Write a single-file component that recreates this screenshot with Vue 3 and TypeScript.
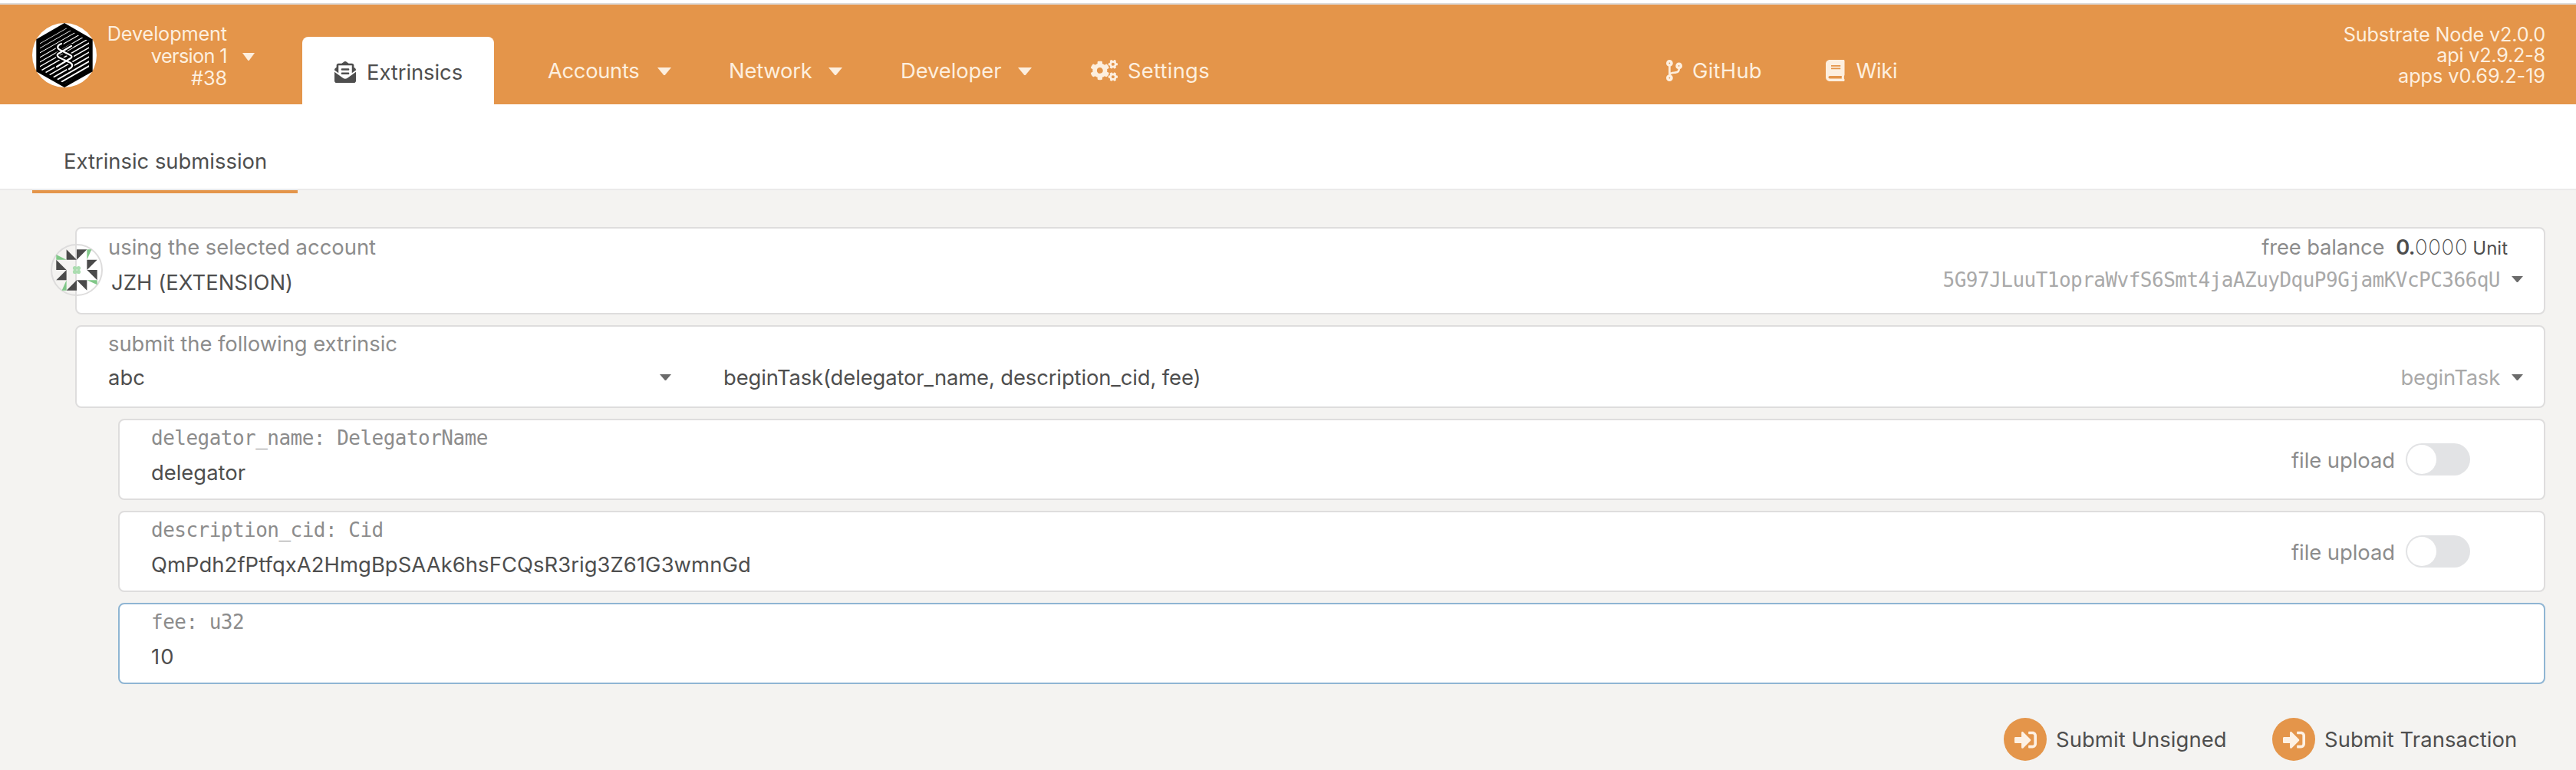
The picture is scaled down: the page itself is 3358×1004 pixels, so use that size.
<script setup lang="ts">
interface NavItem { label: string; cls: string; icon?: string; box?: string; caret?: boolean }

const icons: Record<string, string> = {
  branch: 'M384 144c0-44.2-35.8-80-80-80s-80 35.8-80 80c0 36.4 24.3 67.1 57.5 76.8-.6 16.1-4.2 28.5-11 36.9-15.4 19.2-49.3 22.4-85.2 25.7-28.2 2.6-57.4 5.4-81.3 16.9v-144c32.5-10.2 56-40.5 56-76.3 0-44.2-35.8-80-80-80S0 35.8 0 80c0 35.8 23.5 66.1 56 76.3v199.3C23.5 365.9 0 396.2 0 432c0 44.2 35.8 80 80 80s80-35.8 80-80c0-34-21.2-63.1-51.2-74.6 3.1-5.2 7.8-9.8 14.9-13.4 16.2-8.2 40.4-10.4 66.1-12.8 42.2-3.9 90-8.4 118.2-43.4 14-17.4 21.1-39.8 21.6-67.9 31.6-10.8 54.4-40.7 54.4-75.9zM80 64c8.8 0 16 7.2 16 16s-7.2 16-16 16-16-7.2-16-16 7.2-16 16-16zm0 384c-8.8 0-16-7.2-16-16s7.2-16 16-16 16 7.2 16 16-7.2 16-16 16zm224-320c8.8 0 16 7.2 16 16s-7.2 16-16 16-16-7.2-16-16 7.2-16 16-16z',
  book: 'M448 360V24c0-13.3-10.7-24-24-24H96C43 0 0 43 0 96v320c0 53 43 96 96 96h328c13.3 0 24-10.7 24-24v-16c0-7.5-3.5-14.3-8.9-18.7-4.2-15.4-4.2-59.3 0-74.7 5.4-4.3 8.9-11.1 8.9-18.6zM128 134c0-3.3 2.7-6 6-6h212c3.3 0 6 2.7 6 6v20c0 3.3-2.7 6-6 6H134c-3.3 0-6-2.7-6-6v-20zm0 64c0-3.3 2.7-6 6-6h212c3.3 0 6 2.7 6 6v20c0 3.3-2.7 6-6 6H134c-3.3 0-6-2.7-6-6v-20zm253.4 250H96c-17.7 0-32-14.3-32-32 0-17.6 14.4-32 32-32h285.4c-1.9 17.1-1.9 46.9 0 64z',
  signIn: 'M416 448h-84c-6.6 0-12-5.4-12-12v-40c0-6.6 5.4-12 12-12h84c17.7 0 32-14.3 32-32V160c0-17.7-14.3-32-32-32h-84c-6.6 0-12-5.4-12-12V76c0-6.6 5.4-12 12-12h84c53 0 96 43 96 96v192c0 53-43 96-96 96zm-47-201L201 79c-15-15-41-4.5-41 17v96H24c-13.3 0-24 10.7-24 24v96c0 13.3 10.7 24 24 24h136v96c0 21.5 26 32 41 17l168-168c9.3-9.4 9.3-24.6 0-34z',
  envelope: 'M176 216h160c8.84 0 16-7.16 16-16v-16c0-8.84-7.16-16-16-16H176c-8.84 0-16 7.16-16 16v16c0 8.84 7.16 16 16 16zm-16 80c0 8.84 7.16 16 16 16h160c8.84 0 16-7.16 16-16v-16c0-8.84-7.16-16-16-16H176c-8.84 0-16 7.16-16 16v16zm96 121.13c-16.42 0-32.84-5.06-46.86-15.19L0 250.86V464c0 26.51 21.49 48 48 48h416c26.51 0 48-21.49 48-48V250.86L302.86 401.94c-14.02 10.12-30.44 15.19-46.86 15.19zm237.61-254.18c-8.85-6.94-17.24-13.47-29.61-22.81V96c0-26.51-21.49-48-48-48h-77.55c-3.04-2.2-5.87-4.26-9.04-6.56C312.6 29.17 279.2-.35 256 0c-23.2-.35-56.59 29.17-73.41 41.44-3.17 2.3-6 4.36-9.04 6.56H96c-26.51 0-48 21.49-48 48v44.14c-12.37 9.33-20.76 15.87-29.61 22.81A47.995 47.995 0 0 0 0 200.72v10.65l96 69.35V96h320v184.72l96-69.35v-10.65c0-14.74-6.78-28.67-18.39-37.77z',
  bigGear: 'M386.3 286.1l33.7 16.8c10.1 5.8 14.5 18.1 10.5 29.1-8.9 24.2-26.4 46.4-42.6 65.8-7.4 8.9-20.2 11.1-30.3 5.3l-29.1-16.8c-16 13.7-34.6 24.6-54.9 31.7v33.6c0 11.6-8.3 21.6-19.7 23.6-24.6 4.2-50.4 4.4-75.9 0-11.5-2-20-11.9-20-23.6V418c-20.3-7.2-38.9-18-54.9-31.7L74 403c-10 5.8-22.9 3.6-30.3-5.3-16.2-19.4-33.3-41.6-42.2-65.7-4-10.9.4-23.2 10.5-29.1l33.3-16.8c-3.9-20.9-3.9-42.4 0-63.4L12 205.8c-10.1-5.8-14.6-18.1-10.5-29 8.9-24.2 26-46.4 42.2-65.8 7.4-8.9 20.2-11.1 30.3-5.3l29.1 16.8c16-13.7 34.6-24.6 54.9-31.7V57.1c0-11.5 8.2-21.5 19.6-23.5 24.6-4.2 50.5-4.4 76-.1 11.5 2 20 11.9 20 23.6v33.6c20.3 7.2 38.9 18 54.9 31.7l29.1-16.8c10-5.8 22.9-3.6 30.3 5.3 16.2 19.4 33.2 41.6 42.1 65.8 4 10.9.1 23.2-10 29.1l-33.7 16.8c3.9 21 3.9 42.5 0 63.5zm-117.6 21.1c59.2-77-28.7-164.9-105.7-105.7-59.2 77 28.7 164.9 105.7 105.7z',
  smallGear: 'M512.1 191l-8.2 14.3c-3 5.3-9.4 7.5-15.1 5.4-11.8-4.4-22.6-10.7-32.1-18.6-4.6-3.8-5.8-10.5-2.8-15.7l8.2-14.3c-6.9-8-12.3-17.3-15.9-27.4h-16.5c-6 0-11.2-4.3-12.2-10.3-2-12-2.1-24.6 0-37.1 1-6 6.2-10.4 12.2-10.4h16.5c3.6-10.1 9-19.4 15.9-27.4l-8.2-14.3c-3-5.2-1.9-11.9 2.8-15.7 9.5-7.9 20.4-14.2 32.1-18.6 5.7-2.1 12.1.1 15.1 5.4l8.2 14.3c10.5-1.9 21.2-1.9 31.7 0L552 6.3c3-5.3 9.4-7.5 15.1-5.4 11.8 4.4 22.6 10.7 32.1 18.6 4.6 3.8 5.8 10.5 2.8 15.7l-8.2 14.3c6.9 8 12.3 17.3 15.9 27.4h16.5c6 0 11.2 4.3 12.2 10.3 2 12 2.1 24.6 0 37.1-1 6-6.2 10.4-12.2 10.4h-16.5c-3.6 10.1-9 19.4-15.9 27.4l8.2 14.3c3 5.2 1.9 11.9-2.8 15.7-9.5 7.9-20.4 14.2-32.1 18.6-5.7 2.1-12.1-.1-15.1-5.4l-8.2-14.3c-10.4 1.9-21.2 1.9-31.7 0zm-10.5-58.8c38.5 29.6 82.4-14.3 52.8-52.8-38.5-29.7-82.4 14.3-52.8 52.8z',
}

const nav: NavItem[] = [
  { label: 'Accounts', cls: 'n-accounts', caret: true },
  { label: 'Network', cls: 'n-network', caret: true },
  { label: 'Developer', cls: 'n-developer', caret: true },
  { label: 'Settings', cls: 'n-settings', icon: 'gears' },
  { label: 'GitHub', cls: 'n-github', icon: 'branch', box: '0 0 384 512' },
  { label: 'Wiki', cls: 'n-wiki', icon: 'book', box: '0 0 448 512' },
]

const params = [
  { type: 'delegator_name: DelegatorName', value: 'delegator', upload: true, cls: 'v-name' },
  { type: 'description_cid: Cid', value: 'QmPdh2fPtfqxA2HmgBpSAAk6hsFCQsR3rig3Z61G3wmnGd', upload: true, cls: 'v-cid' },
  { type: 'fee: u32', value: '10', upload: false, cls: 'v-fee' },
]

const actions = ['Submit Unsigned', 'Submit Transaction']

// Diagonal hatching of the logo, getting heavier towards the bottom
const stripes = Array.from({ length: 15 }, (_, i) => ({ y: 2 + i * 6, w: 0.7 + i * 0.1 }))
</script>

<template>
  <div class="page">
    <header class="topbar">
      <div class="chain">
        <svg class="logo" viewBox="0 0 84 84">
          <defs>
            <clipPath id="hexInner"><path d="M42 5L74 24V60L42 79L10 60V24Z" /></clipPath>
          </defs>
          <circle cx="42" cy="42" r="42" fill="#fff" />
          <path d="M42 0L78.7 21.3V63.3L42 84L5.3 63.3V21.3Z" fill="#000" />
          <g clip-path="url(#hexInner)" stroke="#fff">
            <line v-for="s in stripes" :key="s.y" x1="8" :y1="s.y + 20" x2="76" :y2="s.y - 19" :stroke-width="s.w" />
          </g>
          <g fill="none" stroke-linecap="round" stroke-linejoin="round">
            <g stroke="#000" stroke-width="5.5">
              <path d="M38 27C32 29 32 33 36 35L50 42Q53 44 50 46L32 57" />
              <path d="M51 30L34 40Q31 42 35 45L50 52C54 55 52 58 48 60" />
            </g>
            <g stroke="#fff" stroke-width="2.2">
              <path d="M38 27C32 29 32 33 36 35L50 42Q53 44 50 46L32 57" />
              <path d="M51 30L34 40Q31 42 35 45L50 52C54 55 52 58 48 60" />
            </g>
          </g>
        </svg>
        <div class="chain-info">
          <div class="s-dev">Development</div>
          <div class="s-ver">version 1</div>
          <div class="s-num">#38</div>
        </div>
        <i class="caret caret-chain"></i>
      </div>
      <div class="tab">
        <svg viewBox="0 0 512 512" width="28" height="28"><path :d="icons.envelope" fill="currentColor" /></svg>
        <span>Extrinsics</span>
      </div>
      <nav class="nav">
        <div v-for="n in nav" :key="n.label" class="nav-item" :class="n.cls">
          <svg v-if="n.icon === 'gears'" viewBox="0 0 640 512" width="35" height="28">
            <path :d="icons.bigGear" fill="currentColor" />
            <path :d="icons.smallGear" fill="currentColor" />
            <path :d="icons.smallGear" fill="currentColor" transform="translate(0 298.9)" />
          </svg>
          <svg v-else-if="n.icon" :viewBox="n.box" height="28"><path :d="icons[n.icon]" fill="currentColor" /></svg>
          <span class="nav-label">{{ n.label }}</span>
          <i v-if="n.caret" class="caret caret-nav"></i>
        </div>
      </nav>
      <div class="versions">
        <div class="s-node">Substrate Node v2.0.0</div>
        <div class="s-api">api v2.9.2-8</div>
        <div class="s-apps">apps v0.69.2-19</div>
      </div>
    </header>

    <div class="subbar"><div class="subtab">Extrinsic submission</div></div>

    <main class="content">
      <section class="card account">
        <svg class="identicon" viewBox="0 0 68 68">
          <circle cx="34" cy="34" r="33" fill="none" stroke="#dddcdc" stroke-width="2" />
          <g transform="translate(7.3 7.3) scale(13.35)">
            <path fill="#4a4a4a" d="M1 0L2 1H1ZM2 0H3L2 1ZM0 1L1 2H0ZM3 1H4L3 2ZM1 2V3H0ZM3 2H4V3ZM2 3V4H1ZM2 3H3V4Z" />
            <path fill="#80c788" d="M0 .5L1 1H0ZM3 0H3.45L3 1ZM1 3V4H.55ZM3 3H4V3.45Z" />
            <g fill="#abddb0">
              <circle cx="1.82" cy="1.82" r=".2" /><circle cx="2.18" cy="1.82" r=".2" />
              <circle cx="1.82" cy="2.18" r=".2" /><circle cx="2.18" cy="2.18" r=".2" />
            </g>
          </g>
        </svg>
        <div class="row">
          <span class="label">using the selected account</span>
          <span class="balance">
            <span class="label free">free balance</span><b>0.</b><span class="decimals">0000</span><span class="unit">Unit</span>
          </span>
        </div>
        <div class="row">
          <span class="account-name">JZH (EXTENSION)</span>
          <span class="picker"><span class="mono address">5G97JLuuT1opraWvfS6Smt4jaAZuyDquP9GjamKVcPC366qU</span><i class="caret caret-small"></i></span>
        </div>
      </section>

      <section class="card extrinsic">
        <div class="row"><span class="label following">submit the following extrinsic</span></div>
        <div class="row">
          <span class="module"><span>abc</span><i class="caret caret-small"></i></span>
          <span class="call">beginTask(delegator_name, description_cid, fee)</span>
          <span class="picker"><span class="method">beginTask</span><i class="caret caret-small"></i></span>
        </div>
      </section>

      <section v-for="p in params" :key="p.type" class="card param" :class="{ focused: !p.upload }">
        <div>
          <div class="mono type">{{ p.type }}</div>
          <div :class="p.cls">{{ p.value }}</div>
        </div>
        <div v-if="p.upload" class="upload">
          <span class="label file">file upload</span>
          <span class="toggle"><i></i></span>
        </div>
      </section>

      <div class="actions">
        <div v-for="a in actions" :key="a" class="action">
          <span class="action-icon"><svg viewBox="0 0 512 512" width="29" height="29"><path :d="icons.signIn" fill="#fdf1e4" /></svg></span>
          <span class="action-label">{{ a }}</span>
        </div>
      </div>
    </main>
  </div>
</template>

<style>
body { margin: 0; background: #f4f3f1; }
</style>

<style scoped>
.page { box-sizing: border-box; width: 3358px; height: 1004px; padding-top: 4px; overflow: hidden; background: linear-gradient(#fff 4px, #f4f3f1 4px); font: 400 27.4px/40px Inter, "Liberation Sans", sans-serif; color: #4e4e4e; white-space: nowrap; }
.page * { box-sizing: border-box; }
.topbar { display: flex; height: 132px; border-top: 2px solid #dcdcdc; background: #e4954a; color: #fdefdf; }
.chain { display: flex; width: 394px; padding: 24px 0 0 42px; align-items: flex-start; }
.logo { width: 84px; height: 84px; display: block; }
.chain-info { width: 170px; text-align: right; font-size: 25.3px; line-height: 29px; margin-top: -1px; }
.s-dev { letter-spacing: -.15px; }
.s-ver { letter-spacing: -.65px; }
.s-num { letter-spacing: -.1px; }
.caret { display: block; flex: none; width: 18px; height: 10px; background: currentColor; clip-path: polygon(0 0, 100% 0, 54% 100%, 46% 100%); }
.caret-chain { margin: 39px 0 0 20px; width: 16px; }
.tab { display: flex; align-items: center; width: 250px; height: 88px; margin-top: 42px; padding: 4px 0 0 42px; gap: 14px; border-radius: 8px 8px 0 0; background: #fff; color: #4e4e4e; letter-spacing: -.06px; }
.nav { display: flex; align-items: flex-start; width: 2270px; padding: 66px 0 0 70px; }
.nav-item { display: flex; align-items: center; height: 40px; }
.nav-item svg { flex: none; }
.n-accounts { width: 236px; letter-spacing: -.34px; }
.n-accounts .nav-label { width: 143px; }
.n-network { width: 224px; letter-spacing: -.22px; }
.n-network .nav-label { width: 130px; }
.n-developer { width: 248px; letter-spacing: -.08px; }
.n-developer .nav-label { width: 153px; }
.n-settings { width: 750px; letter-spacing: .25px; }
.n-github { width: 208px; letter-spacing: .25px; }
.n-wiki { letter-spacing: -.4px; }
.caret-nav { margin-top: 2px; }
.n-settings .nav-label, .n-github .nav-label { margin-left: 13px; }
.n-wiki .nav-label { margin-left: 15px; }
.versions { width: 404px; padding-top: 25px; text-align: right; font-size: 25.3px; line-height: 27px; }
.s-node { letter-spacing: -.21px; }
.s-api { letter-spacing: -.25px; }
.s-apps { letter-spacing: -.06px; }
.subbar { height: 112px; border-bottom: 2px solid #ebeaea; background: #fff; padding-left: 42px; }
.subtab { width: 346px; height: 116px; border-bottom: 4px solid #e4954a; padding: 54px 0 0 41px; }
.content { padding: 48px 40px 0 98px; }
.card { position: relative; border: 2px solid #dedddd; border-radius: 8px; background: #fff; margin-bottom: 14px; padding-left: 41px; }
.account { height: 114px; padding-top: 4px; }
.account .row + .row { margin-top: 6px; }
.account-name { margin-left: 4px; letter-spacing: .06px; }
.extrinsic { height: 108px; padding-top: 2px; }
.extrinsic .row + .row { margin-top: 4px; }
.row { display: flex; justify-content: space-between; height: 40px; }
.label { color: #8c8c8c; }
.following { letter-spacing: -.05px; }
.balance { padding-right: 47px; display: flex; align-items: baseline; }
.free { letter-spacing: -.16px; }
.balance b { font-weight: 600; margin-left: 15px; letter-spacing: -.7px; }
.decimals { font-weight: 200; letter-spacing: .8px; }
.unit { font-size: 24px; margin-left: 6px; }
.picker { display: flex; align-items: flex-start; padding-right: 27px; }
.mono { font-family: "DejaVu Sans Mono", "Liberation Mono", monospace; font-size: 26px; letter-spacing: -.52px; }
.address { color: #a9a9a9; margin-top: -3px; }
.caret-small { width: 15px; height: 8px; margin: 16px 0 0 15px; color: #6b6b6b; }
.account .caret-small { margin-top: 12px; }
.method { color: #a9a9a9; letter-spacing: -.17px; }
.module { display: flex; width: 802px; justify-content: space-between; padding-right: 68px; }
.call { flex: 1; letter-spacing: -.11px; }
.identicon { position: absolute; left: -34px; top: 20px; width: 68px; height: 68px; }
.param { display: flex; height: 106px; margin-left: 56px; padding-top: 3px; justify-content: space-between; }
.focused { border-color: #8fb5d3; }
.type { color: #8c8c8c; height: 45px; }
.v-cid { letter-spacing: .07px; }
.v-fee { letter-spacing: 1px; }
.upload { display: flex; height: 42px; margin-top: 27px; padding-right: 96px; gap: 14px; }
.file { margin-top: 2px; letter-spacing: -.05px; }
.toggle { width: 84px; height: 42px; border-radius: 21px; background: #e2e3e5; padding: 2px; }
.toggle i { display: block; width: 38px; height: 38px; border-radius: 50%; background: #fff; }
.actions { display: flex; margin-top: 44px; padding-left: 2514px; }
.action { display: flex; align-items: center; width: 350px; height: 56px; }
.action-label { letter-spacing: .1px; }
.action-icon { display: flex; align-items: center; justify-content: center; width: 56px; height: 56px; margin-right: 12px; border-radius: 50%; background: #e4954a; }
</style>
